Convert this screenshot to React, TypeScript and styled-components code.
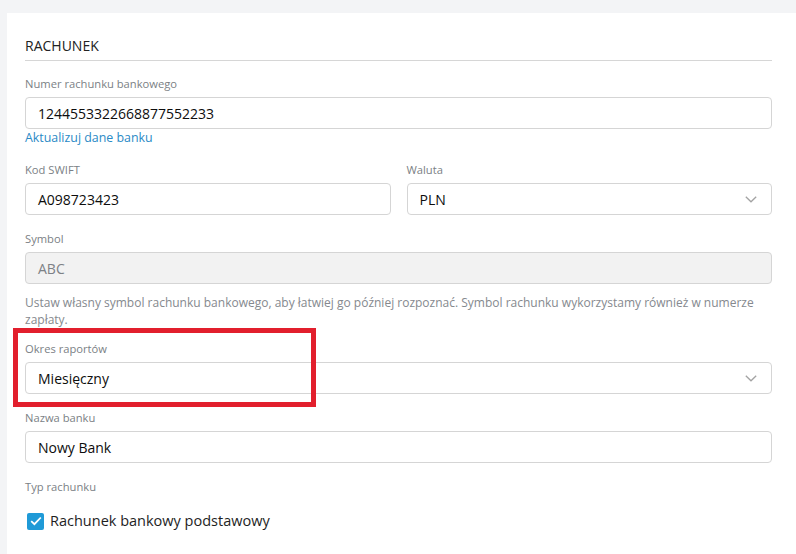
import React from "react";
import styled, { createGlobalStyle } from "styled-components";

const Global = createGlobalStyle`
  html, body { margin: 0; padding: 0; background: #f3f4f6; }
  body { font-family: "Open Sans", "Noto Sans", sans-serif; -webkit-font-smoothing: antialiased; }
  * { box-sizing: border-box; }
`;

const Panel = styled.div`
  margin: 13px 0 0 7px;
  background: #ffffff;
  min-height: calc(100vh - 13px);
  padding: 24px 24px 20px 18px;
`;

const Heading = styled.h2`
  margin: 0;
  font-size: 14px;
  line-height: 18px;
  font-weight: 400;
  color: #222;
  padding-bottom: 5px;
  border-bottom: 1px solid #d6d6d6;
  margin-bottom: 15px;
`;

const Field = styled.div<{ $mt?: number }>`
  position: relative;
  margin-top: ${(p) => p.$mt ?? 0}px;
  display: flex;
  flex-direction: column;
  min-width: 0;
`;

const Label = styled.label`
  font-size: 11.2px;
  line-height: 16px;
  color: #7b7f85;
  margin-bottom: 5px;
`;

const InputBox = styled.div<{ $disabled?: boolean }>`
  height: 32px;
  border: 1px solid #d5d5d5;
  border-radius: 4px;
  background: ${(p) => (p.$disabled ? "#f2f2f2" : "#fff")};
  display: flex;
  align-items: center;
  justify-content: space-between;
  padding: 0 14px 0 12px;
  font-size: 14px;
  font-weight: 500;
  color: ${(p) => (p.$disabled ? "#7d8186" : "#0d0d0d")};
`;

const Link = styled.a`
  font-size: 12.4px;
  line-height: 17px;
  color: #2a8ac6;
  text-decoration: none;
`;

const Row = styled.div`
  display: grid;
  grid-template-columns: 1fr 1fr;
  column-gap: 16px;
  margin-top: 16px;
`;

const Help = styled.p`
  margin: 10px 0 0;
  font-size: 12px;
  line-height: 17px;
  color: #85898e;
`;

const Highlight = styled.div`
  position: absolute;
  left: -12px;
  top: -13px;
  width: 303px;
  height: 79px;
  border: 5px solid #e21f2d;
  pointer-events: none;
`;

const CheckRow = styled.div`
  display: flex;
  align-items: center;
  gap: 6px;
  margin-top: 11px;
  padding-left: 2px;
  font-size: 14.5px;
  line-height: 20px;
  color: #1e1e1e;
`;

const Box = styled.span`
  width: 17px;
  height: 17px;
  border-radius: 2px;
  background: #1f9ad7;
  display: inline-flex;
  align-items: center;
  justify-content: center;
`;

const Chevron = () => (
  <svg width="12" height="7" viewBox="0 0 12 7" fill="none">
    <path d="M0.8 0.8 L6 5.8 L11.2 0.8" stroke="#a3a3a3" strokeWidth="1.3" />
  </svg>
);

export default function App() {
  return (
    <>
      <Global />
      <Panel>
        <Heading>RACHUNEK</Heading>
        <Field>
          <Label>Numer rachunku bankowego</Label>
          <InputBox>1244553322668877552233</InputBox>
          <Link href="#">Aktualizuj dane banku</Link>
        </Field>
        <Row>
          <Field>
            <Label>Kod SWIFT</Label>
            <InputBox>A098723423</InputBox>
          </Field>
          <Field>
            <Label>Waluta</Label>
            <InputBox>
              PLN
              <Chevron />
            </InputBox>
          </Field>
        </Row>
        <Field $mt={16}>
          <Label>Symbol</Label>
          <InputBox $disabled>ABC</InputBox>
        </Field>
        <Help>
          Ustaw własny symbol rachunku bankowego, aby łatwiej go później rozpoznać. Symbol rachunku
          wykorzystamy również w numerze zapłaty.
        </Help>
        <Field $mt={13}>
          <Highlight />
          <Label>Okres raportów</Label>
          <InputBox>
            Miesięczny
            <Chevron />
          </InputBox>
        </Field>
        <Field $mt={16}>
          <Label>Nazwa banku</Label>
          <InputBox>Nowy Bank</InputBox>
        </Field>
        <Field $mt={16}>
          <Label>Typ rachunku</Label>
        </Field>
        <CheckRow>
          <Box>
            <svg width="12" height="10" viewBox="0 0 12 10" fill="none">
              <path d="M1.2 5.2 L4.4 8.2 L10.8 1.5" stroke="#fff" strokeWidth="1.8" />
            </svg>
          </Box>
          Rachunek bankowy podstawowy
        </CheckRow>
      </Panel>
    </>
  );
}
